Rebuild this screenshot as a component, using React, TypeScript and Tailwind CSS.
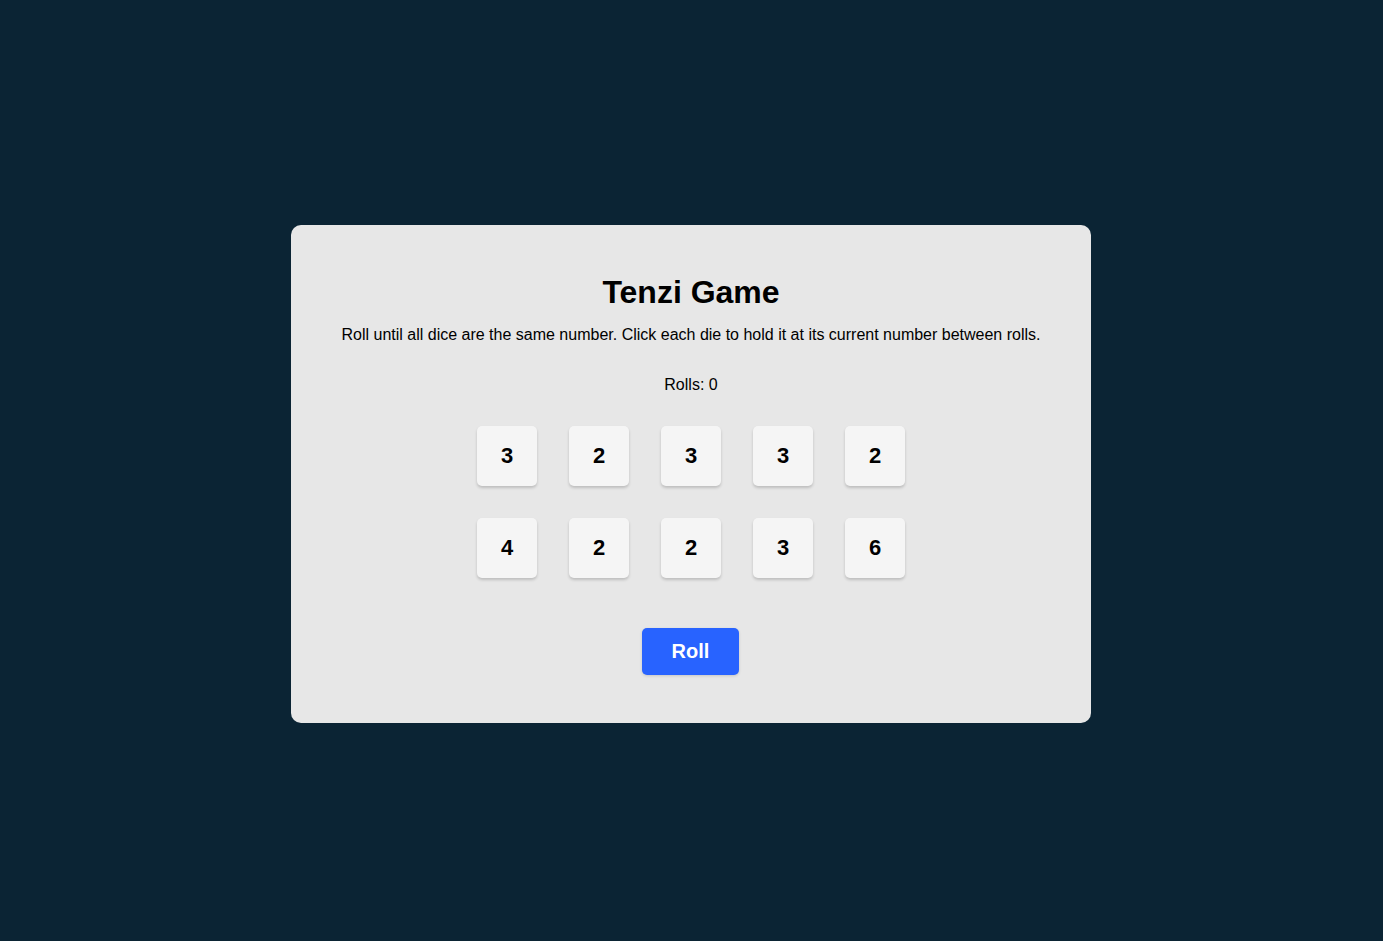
const dice = [3, 2, 3, 3, 2, 4, 2, 2, 3, 6];

function Die({ value }: { value: number }) {
  return (
    <button className="flex h-[60px] w-[60px] items-center justify-center rounded-[5px] bg-[#f5f5f5] pb-[2px] text-[22px] font-bold text-black shadow-[0_2px_3px_rgba(0,0,0,0.18)]">
      {value}
    </button>
  );
}

export default function App() {
  return (
    <main className="flex min-h-screen items-center justify-center bg-[#0b2434] pt-[7px] pr-px font-['Liberation_Sans',Arial,sans-serif]">
      <div className="flex w-[800px] flex-col items-center rounded-[10px] bg-[#e7e7e7] px-12 pt-[49px] pb-12">
        <h1 className="text-[32px] leading-[37px] font-bold text-black">Tenzi Game</h1>
        <p className="mt-[15px] text-[16px] leading-[18px] text-black">
          Roll until all dice are the same number. Click each die to hold it at its current number between rolls.
        </p>
        <p className="mt-[32px] text-[16px] leading-[18px] text-black">Rolls: 0</p>
        <div className="mt-[32px] grid grid-cols-5 gap-8">
          {dice.map((d, i) => (
            <Die key={i} value={d} />
          ))}
        </div>
        <button className="mt-[50px] mr-px h-[47px] w-[97px] rounded-[5px] bg-[#2863ff] pb-[2px] text-[20px] font-bold text-white shadow-[0_1px_3px_rgba(0,0,0,0.15)]">
          Roll
        </button>
      </div>
    </main>
  );
}
